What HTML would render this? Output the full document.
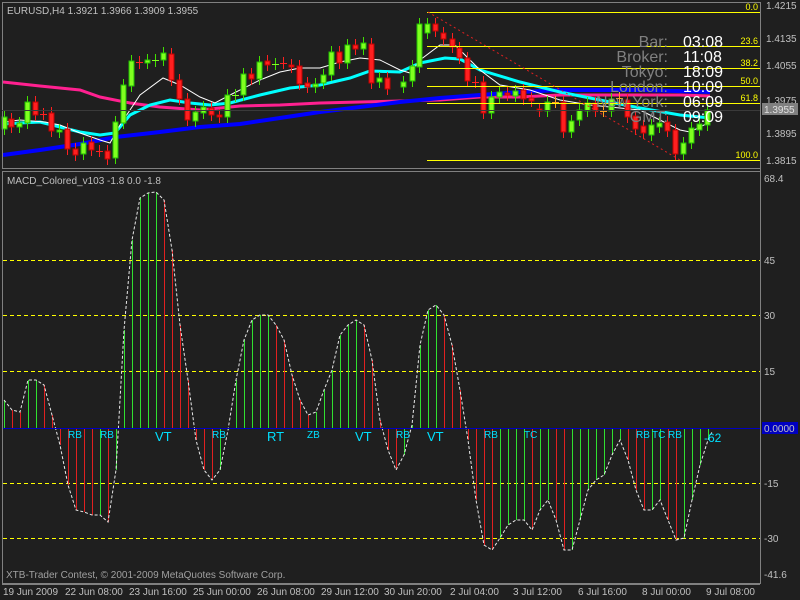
<!DOCTYPE html>
<html><head><meta charset="utf-8"><style>
body{margin:0;background:#1f1f1f;width:800px;height:600px;overflow:hidden}
svg{display:block}
text{font-family:"Liberation Sans",sans-serif}
</style></head><body>
<svg id="s" width="800" height="600" xmlns="http://www.w3.org/2000/svg">
<rect width="800" height="600" fill="#1f1f1f"/>
<g id="main"></g>
<rect x="2.5" y="2.5" width="758" height="166" fill="none" stroke="#808080"/>
<rect x="2.5" y="171.5" width="758" height="412" fill="none" stroke="#808080"/>
<line x1="760.5" y1="2" x2="760.5" y2="584" stroke="#808080"/>
<line x1="2" y1="110.5" x2="760" y2="110.5" stroke="#3a3a3a"/>
<g stroke="#ffff00" stroke-width="1">
<line x1="427" y1="12.5" x2="760" y2="12.5"/><line x1="427" y1="46.5" x2="760" y2="46.5"/>
<line x1="427" y1="68.5" x2="760" y2="68.5"/><line x1="427" y1="86.5" x2="760" y2="86.5"/>
<line x1="427" y1="103.5" x2="760" y2="103.5"/><line x1="427" y1="160.5" x2="760" y2="160.5"/>
</g>
<g fill="#ffff00" font-size="9" text-anchor="end">
<text x="758" y="10">0.0</text><text x="758" y="44">23.6</text><text x="758" y="66">38.2</text>
<text x="758" y="84">50.0</text><text x="758" y="101">61.8</text><text x="758" y="158">100.0</text>
</g>
<line x1="428" y1="12" x2="680" y2="160" stroke="#e02020" stroke-dasharray="2,3"/>
<g font-size="16" fill="#808080" text-anchor="end">
<text x="668" y="47">Bar:</text><text x="668" y="62">Broker:</text><text x="668" y="77">Tokyo:</text>
<text x="668" y="92">London:</text><text x="668" y="107">New York:</text><text x="668" y="122">GMT:</text>
</g>
<g font-size="16" fill="#ffffff">
<text x="683" y="47">03:08</text><text x="683" y="62">11:08</text><text x="683" y="77">18:09</text>
<text x="683" y="92">10:09</text><text x="683" y="107">06:09</text><text x="683" y="122">09:09</text>
</g>
<text x="7" y="14" font-size="10" fill="#c0c0c0">EURUSD,H4  1.3921 1.3966 1.3909 1.3955</text>
<g font-size="10" fill="#c0c0c0">
<text x="766" y="9">1.4215</text><text x="766" y="42">1.4135</text><text x="766" y="69">1.4055</text>
<text x="766" y="104">1.3975</text><text x="766" y="137">1.3895</text><text x="766" y="164">1.3815</text>
<text x="764" y="182">68.4</text><text x="764" y="264">45</text><text x="764" y="319">30</text>
<text x="764" y="375">15</text><text x="764" y="487">-15</text><text x="764" y="542">-30</text><text x="764" y="578">-41.6</text>
</g>
<rect x="762" y="103" width="36" height="12" fill="#808080"/>
<text x="764" y="113" font-size="10" fill="#e0e0e0">1.3955</text>
<g stroke="#ffff00" stroke-dasharray="4,3">
<line x1="3" y1="260.5" x2="760" y2="260.5"/><line x1="3" y1="315.5" x2="760" y2="315.5"/>
<line x1="3" y1="371.5" x2="760" y2="371.5"/><line x1="3" y1="483.5" x2="760" y2="483.5"/>
<line x1="3" y1="538.5" x2="760" y2="538.5"/>
</g>
<g id="macd"></g>
<line x1="3" y1="428.5" x2="760" y2="428.5" stroke="#0000c0"/>
<rect x="762" y="422" width="36" height="12" fill="#0000c0"/>
<text x="764" y="432" font-size="10" fill="#c0c0c0">0.0000</text>
<text x="7" y="184" font-size="10" fill="#c0c0c0">MACD_Colored_v103 -1.8 0.0 -1.8</text>
<g font-size="10" fill="#00e0ff">
<text x="68" y="438">RB</text><text x="100" y="438">RB</text><text x="155" y="441" font-size="13">VT</text>
<text x="212" y="438">RB</text><text x="267" y="441" font-size="13">RT</text><text x="307" y="438">ZB</text>
<text x="355" y="441" font-size="13">VT</text><text x="396" y="438">RB</text><text x="427" y="441" font-size="13">VT</text>
<text x="484" y="438">RB</text><text x="524" y="438">TC</text><text x="636" y="438">RB</text>
<text x="652" y="438">TC</text><text x="668" y="438">RB</text><text x="704" y="442" font-size="12">-62</text>
</g>
<text x="6" y="578" font-size="10" fill="#a0a0a0">XTB-Trader Contest, © 2001-2009 MetaQuotes Software Corp.</text>
<line x1="2" y1="584.5" x2="760" y2="584.5" stroke="#808080"/>
<g font-size="10" fill="#c0c0c0">
<text x="3" y="595">19 Jun 2009</text><text x="65" y="595">22 Jun 08:00</text><text x="129" y="595">23 Jun 16:00</text>
<text x="193" y="595">25 Jun 00:00</text><text x="257" y="595">26 Jun 08:00</text><text x="321" y="595">29 Jun 12:00</text>
<text x="384" y="595">30 Jun 20:00</text><text x="450" y="595">2 Jul 04:00</text><text x="513" y="595">3 Jul 12:00</text>
<text x="578" y="595">6 Jul 16:00</text><text x="642" y="595">8 Jul 00:00</text><text x="706" y="595">9 Jul 08:00</text>
</g>
</svg>
<script>
var NS="http://www.w3.org/2000/svg";
function el(p,t,a){var e=document.createElementNS(NS,t);for(var k in a)e.setAttribute(k,a[k]);p.appendChild(e);return e;}
var m=document.getElementById("main");
function pl(pts,c,w){el(m,"polyline",{points:pts.map(function(p){return p.join(",")}).join(" "),fill:"none",stroke:c,"stroke-width":w});}
pl([[3,82],[40,86],[80,90],[100,97],[130,103],[160,107],[200,110],[240,106],[280,105],[320,103],[360,102],[400,101],[440,100],[480,97],[520,97],[560,95],[620,95],[680,95],[710,96]],"#ff2090",3);
pl([[3,155],[40,150],[80,144],[116,137],[160,132],[200,127],[240,124],[280,118],[320,112],[360,107],[400,102],[440,98],[480,95],[520,92],[560,90],[600,90],[640,90],[710,92]],"#0000ff",4);
pl([[3,124],[20,123],[40,122],[60,127],[80,132],[100,135],[115,133],[130,115],[150,105],[170,100],[190,103],[210,105],[230,103],[260,95],[290,88],[320,85],[350,78],[370,71],[400,72],[420,63],[445,58],[460,59],[480,70],[520,82],[560,92],[600,100],[640,108],[680,115],[710,118]],"#00ffff",3);
pl([[3,122],[20,120],[45,122],[60,125],[80,133],[100,140],[110,143],[120,125],[140,95],[163,78],[180,85],[200,97],[215,103],[230,95],[260,80],[280,72],[300,68],[320,68],[340,62],[360,58],[380,60],[400,70],[410,73],[420,60],[440,45],[455,45],[470,60],[480,70],[500,85],[530,90],[560,100],[590,105],[610,107],[640,110],[660,120],[680,130],[690,132],[710,122]],"#ffffff",1);
var C=[[4,'g',117,129],[11,'r',119,127],[19,'g',123,127],[27,'g',102,123],[35,'r',102,115],[43,'r',114,114],[51,'r',113,131],[59,'g',130,132],[67,'r',129,149],[75,'r',149,155],[83,'g',143,154],[91,'r',142,150],[99,'r',151,151],[107,'r',151,159],[115,'g',122,158],[123,'g',85,123],[131,'g',61,86],[139,'r',62,63],[147,'g',60,63],[155,'g',60,61],[163,'g',53,60],[171,'r',54,80],[179,'r',80,99],[187,'r',99,120],[195,'g',112,121],[203,'g',107,113],[211,'r',108,115],[219,'r',115,117],[227,'g',95,117],[235,'g',95,96],[243,'g',74,95],[251,'r',74,79],[259,'g',62,79],[267,'r',61,65],[275,'g',64,64],[283,'r',63,63],[291,'r',65,67],[299,'r',66,84],[307,'r',83,87],[315,'g',84,87],[323,'g',75,83],[331,'g',52,75],[339,'r',52,63],[347,'g',45,63],[355,'r',45,49],[363,'g',43,49],[371,'r',44,83],[379,'g',78,82],[387,'r',78,89],[403,'g',82,87],[412,'g',66,81],[419,'g',24,67],[427,'g',24,33],[435,'r',24,31],[443,'r',33,39],[452,'r',39,47],[459,'r',48,58],[467,'r',58,81],[475,'r',82,82],[483,'r',82,113],[491,'g',97,113],[499,'g',92,97],[507,'r',93,95],[515,'g',91,96],[523,'r',90,99],[531,'r',98,101],[539,'r',109,111],[547,'g',102,111],[555,'o',102,102],[563,'r',102,132],[571,'g',121,132],[579,'g',110,120],[587,'g',103,111],[595,'r',103,111],[603,'o',111,111],[611,'g',99,111],[619,'o',98,98],[627,'r',100,117],[635,'r',116,129],[643,'r',126,133],[651,'g',125,135],[659,'g',123,127],[667,'r',122,131],[675,'r',130,154],[683,'g',143,154],[691,'g',128,143],[699,'g',124,130],[707,'g',110,125]];
C.forEach(function(c){var x=c[0],col=c[1]=='g'?'#80ff20':c[1]=='r'?'#ff2020':'#ffa020',t=c[2],b=c[3];
var lo=c[1]=='r'?'#c00000':'#20c000';
el(m,"line",{x1:x+.5,y1:t-6,x2:x+.5,y2:b+6,stroke:c[1]=='r'?'#ff2020':c[1]=='g'?'#40e000':'#ffa020'});
if(b-t<2){el(m,"line",{x1:x-3,y1:t+.5,x2:x+4,y2:t+.5,stroke:col});}
else el(m,"rect",{x:x-2,y:t,width:5,height:b-t,fill:col,stroke:lo,"stroke-width":1});});
var mg=document.getElementById("macd");
var V=[[4,400],[12,410],[20,412],[28,380],[36,380],[44,385],[52,415],[60,445],[68,485],[76,510],[84,512],[92,515],[100,515],[108,522],[116,470],[124,330],[132,240],[140,198],[148,193],[156,192],[164,200],[172,250],[180,325],[188,380],[196,440],[204,470],[212,480],[220,470],[228,430],[236,380],[244,340],[252,320],[260,315],[268,315],[276,325],[284,340],[292,375],[300,400],[308,415],[316,412],[324,390],[332,370],[340,335],[348,325],[356,320],[364,325],[372,360],[380,420],[388,450],[396,470],[404,455],[412,425],[420,345],[428,310],[436,305],[444,315],[452,345],[460,390],[468,440],[476,500],[484,545],[492,550],[500,538],[508,525],[516,520],[524,520],[532,530],[540,510],[548,500],[556,520],[564,550],[572,550],[580,520],[588,490],[596,480],[604,475],[612,455],[620,440],[628,460],[636,490],[644,510],[652,510],[660,500],[668,520],[676,540],[684,538],[692,500],[700,465],[708,440],[712,432]];
V.forEach(function(v,i){if(v[0]>710)return;var prev=i?V[i-1][1]:v[1];var up=v[1]<=prev;
el(mg,"line",{x1:v[0]+.5,y1:428,x2:v[0]+.5,y2:v[1],stroke:up?'#30e030':'#e02020'});});
el(mg,"polyline",{points:V.map(function(p){return p.join(",")}).join(" "),fill:"none",stroke:"#e8e8e8","stroke-dasharray":"3,2"});
</script>
</body></html>
